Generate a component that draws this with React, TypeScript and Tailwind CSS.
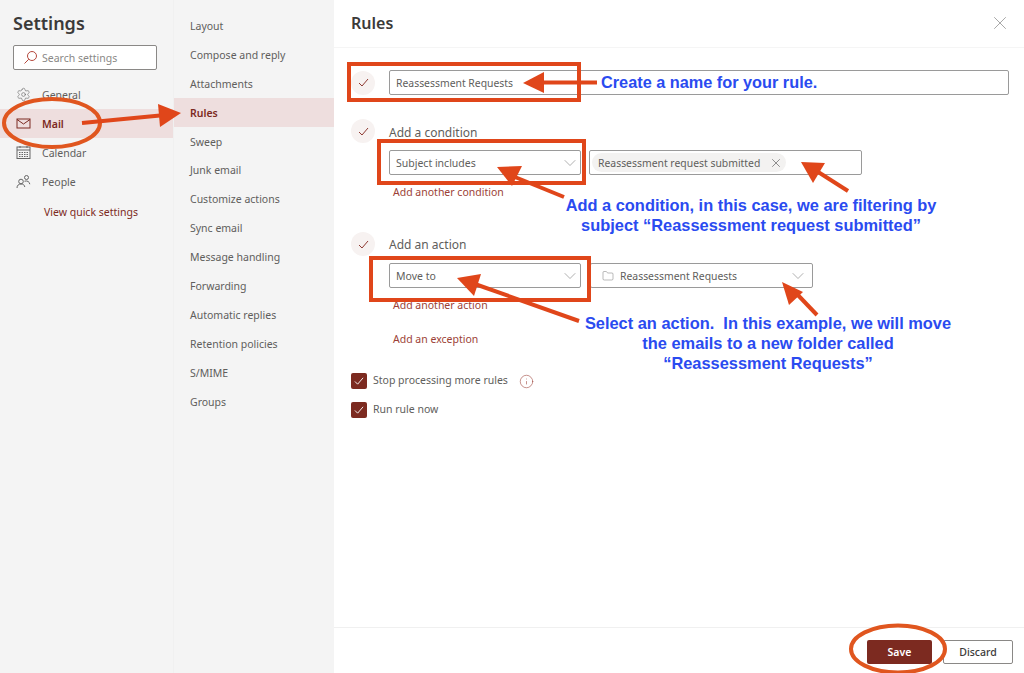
import React from 'react';
import { ChevronDown, Folder, Info, Settings, X } from 'lucide-react';

const subNav = ['Layout', 'Compose and reply', 'Attachments', 'Rules', 'Sweep', 'Junk email', 'Customize actions', 'Sync email', 'Message handling', 'Forwarding', 'Automatic replies', 'Retention policies', 'S/MIME', 'Groups'];

const MailIcon = () => (
    <svg width="15" height="15" viewBox="0 0 15 15" fill="none" stroke="#7c2a22" strokeWidth="1">
        <rect x="1" y="3" width="13" height="9" />
        <path d="M1 3.5 7.5 8 14 3.5" />
    </svg>
);

const CalendarIcon = () => (
    <svg width="15" height="15" viewBox="0 0 15 15" fill="none" stroke="#666" strokeWidth="1">
        <rect x="1" y="2" width="13" height="11.5" />
        <path d="M1 5h13M4 1v2M11 1v2" />
        <path d="M3 7.5h9M3 9.5h9M3 11.5h9" strokeDasharray="1.5 1" />
    </svg>
);

const PeopleIcon = () => (
    <svg width="15" height="15" viewBox="0 0 15 15" fill="none" stroke="#666" strokeWidth="1">
        <circle cx="5" cy="7.5" r="2.3" />
        <path d="M1 14c0-2.6 1.6-4 4-4s3.4 1 3.8 3" />
        <circle cx="10.5" cy="3.5" r="2" />
        <path d="M8.5 7.2c2.8-.8 5 .5 5.3 3" />
    </svg>
);

const SearchIcon = () => (
    <svg width="15" height="15" viewBox="0 0 15 15" fill="none" stroke="#b5483c" strokeWidth="1">
        <circle cx="9" cy="6" r="4.5" />
        <path d="M5.8 9.2 1.5 13.5" />
    </svg>
);

const StepCheck = () => (
    <div className="w-6 h-6 shrink-0 rounded-full bg-[#f7f2f1] flex items-center justify-center">
        <svg width="11" height="11" viewBox="0 0 11 11" fill="none" stroke="#8f3a32" strokeWidth="1">
            <path d="M1 6l3 3 6-7" />
        </svg>
    </div>
);

const CheckBox = () => (
    <div className="w-4 h-4 shrink-0 rounded-[2px] bg-[#7c2a20] flex items-center justify-center">
        <svg width="10" height="10" viewBox="0 0 11 11" fill="none" stroke="#fff" strokeWidth="1">
            <path d="M1 6l3 3 6-7" />
        </svg>
    </div>
);

const Select = ({ label, className }: { label: React.ReactNode; className: string }) => (
    <div className={`h-[25px] border border-[#9a9a9a] rounded-[2px] bg-white flex items-center justify-between pl-[6px] text-[#605e5c] ${className}`}>
        <div className="flex items-center pt-[2px]">{label}</div>
        <ChevronDown size={20} strokeWidth={0.7} color="#777" />
    </div>
);

const Arrow = ({ tail, neck, head }: { tail: string; neck: string; head: string }) => (
    <g>
        <polyline points={`${tail} ${neck}`} fill="none" stroke="#e0461a" strokeWidth="4" />
        <polygon points={head} fill="#e0461a" />
    </g>
);

export default function App() {
    return (
        <div className="relative w-[1024px] h-[673px] overflow-hidden bg-white flex text-[10.5px] text-[#605e5c] font-['Noto_Sans',sans-serif]">
            {/* settings nav */}
            <aside className="w-[173px] shrink-0 bg-[#f4f4f4]">
                <h2 className="h-[45px] pl-[13px] pt-[11px] text-[18px] leading-[24px] font-semibold text-[#3b3a39]">Settings</h2>
                <div className="mx-[13px] h-[25px] w-[144px] border border-[#8a8886] rounded-[2px] bg-white flex items-center pl-[9px] gap-[4px] text-[#8a8886]">
                    <SearchIcon />
                    <span className="pt-[2px]">Search settings</span>
                </div>
                <nav className="mt-[10px]">
                    <div className="h-[29px] pl-[16px] flex items-center gap-[11px]">
                        <Settings size={15} strokeWidth={1} color="#666" />
                        <span className="pt-[2px]">General</span>
                    </div>
                    <div className="h-[29px] pl-[16px] flex items-center gap-[11px] bg-[#eedede] text-[#7c2a22] font-semibold">
                        <MailIcon />
                        <span className="pt-[2px]">Mail</span>
                    </div>
                    <div className="h-[29px] pl-[16px] flex items-center gap-[11px]">
                        <CalendarIcon />
                        <span className="pt-[2px]">Calendar</span>
                    </div>
                    <div className="h-[29px] pl-[16px] flex items-center gap-[11px]">
                        <PeopleIcon />
                        <span className="pt-[2px]">People</span>
                    </div>
                    <div className="mt-[1px] h-[29px] pl-[44px] pt-[2px] flex items-center text-[#7c2a22]">View quick settings</div>
                </nav>
            </aside>

            <aside className="w-[161px] shrink-0 bg-[#f4f4f4] pt-[11.4px] border-l border-[#f0f0f0]">
                {subNav.map((item) => (
                    <div key={item} className={`h-[28.9px] pl-[16px] pt-[2px] flex items-center ${item === 'Rules' ? 'bg-[#eedede] text-[#7c2a22] font-semibold' : ''}`}>
                        {item}
                    </div>
                ))}
            </aside>

            {/* rule form */}
            <main className="flex-1 flex flex-col">
                <header className="h-[48px] shrink-0 border-b border-[#f5f5f5] pl-[17px] pr-[13px] pb-[2px] flex items-center justify-between">
                    <h1 className="text-[16px] font-semibold text-[#3b3a39]">Rules</h1>
                    <X size={22} strokeWidth={0.7} color="#777" />
                </header>

                <div className="flex-1 pl-[17px] pr-[15px] pt-[22px]">
                    <div className="flex items-center gap-[14px]">
                        <StepCheck />
                        <div className="flex-1 h-[25px] border border-[#9a9a9a] rounded-[2px] flex items-center pl-[6px] pt-[2px] text-[10.4px]">Reassessment Requests</div>
                    </div>

                    <div className="mt-[24px] flex items-center gap-[14px] h-[24px]">
                        <StepCheck />
                        <span className="text-[12px] pt-[3px]">Add a condition</span>
                    </div>
                    <div className="mt-[7px] ml-[38px] flex gap-[8px]">
                        <Select label="Subject includes" className="w-[192px]" />
                        <div className="w-[273px] h-[25px] border border-[#9a9a9a] rounded-[2px] flex items-center pl-[2px]">
                            <div className="h-[19px] rounded-full bg-[#f3f2f1] flex items-center pl-[6px] pr-[3px] gap-[9px]">
                                <span className="pt-[2px] text-[10.4px]">Reassessment request submitted</span>
                                <X size={14} strokeWidth={1} color="#444" />
                            </div>
                        </div>
                    </div>
                    <div className="mt-[10px] ml-[42px] h-[15px] leading-[15px] text-[#9c3f36]">Add another condition</div>

                    <div className="mt-[32px] flex items-center gap-[14px] h-[24px]">
                        <StepCheck />
                        <span className="text-[12px] pt-[2px]">Add an action</span>
                    </div>
                    <div className="mt-[7px] ml-[38px] flex gap-[9px]">
                        <Select label="Move to" className="w-[192px]" />
                        <Select
                            className="w-[223px] pr-[4px]"
                            label={
                                <>
                                    <Folder size={12} strokeWidth={0.9} color="#666" className="ml-[5px] mr-[6px]" />
                                    <span className="text-[10.4px]">Reassessment Requests</span>
                                </>
                            }
                        />
                    </div>
                    <div className="mt-[10px] ml-[42px] h-[15px] leading-[15px] text-[#9c3f36]">Add another action</div>
                    <div className="mt-[19px] ml-[42px] h-[15px] leading-[15px] text-[#9c3f36]">Add an exception</div>

                    <div className="mt-[26px] h-[16px] flex items-center gap-[6px]">
                        <CheckBox />
                        <span>Stop processing more rules</span>
                        <Info size={15} strokeWidth={0.9} color="#9c3f36" className="ml-[5px]" />
                    </div>
                    <div className="mt-[13px] h-[16px] flex items-center gap-[6px]">
                        <CheckBox />
                        <span>Run rule now</span>
                    </div>
                </div>

                <footer className="h-[46px] shrink-0 border-t border-[#f0f0f0] pr-[11px] pt-[12px] flex justify-end gap-[11px]">
                    <button className="w-[65px] h-[24px] pt-[1px] rounded-[2px] bg-[#7c2a20] text-white font-semibold">Save</button>
                    <button className="w-[70px] h-[24px] pt-[1px] rounded-[2px] border border-[#8a8886] font-medium text-[#3b3a39]">Discard</button>
                </footer>
            </main>

            {/* annotations drawn over the screenshot */}
            <svg className="absolute inset-0 pointer-events-none" width="1024" height="673" viewBox="0 0 1024 673" fill="none">
                <ellipse cx="52" cy="123" rx="48" ry="24" stroke="#e0561f" strokeWidth="4" />
                <ellipse cx="898" cy="649" rx="47" ry="23.5" stroke="#e0561f" strokeWidth="4" />
                <rect x="349" y="64" width="230" height="36" stroke="#e0461a" strokeWidth="4" />
                <rect x="379" y="141" width="205" height="42" stroke="#e0461a" strokeWidth="4" />
                <rect x="371" y="258" width="218" height="42" stroke="#e0461a" strokeWidth="4" />
                <Arrow tail="82,123" neck="160,115.5" head="158,104 181,113 160,127" />
                <Arrow tail="597,82.5" neck="540,82.5" head="523,83 544,72 544,93" />
                <Arrow tail="564,197" neck="510,175" head="497,167 522,166 512,186" />
                <Arrow tail="848,191" neck="815,170" head="801,162 825,163 813,183" />
                <Arrow tail="579,321" neck="472,283" head="457,278 481,274 474,296" />
                <Arrow tail="817,315" neck="795,292" head="782,282 803,292 789,305" />
            </svg>
            <div className="absolute left-[601px] top-[72px] text-[16.3px] leading-[20px] font-bold text-[#2a4bf0] font-['Liberation_Sans',sans-serif] whitespace-nowrap">Create a name for your rule.</div>
            <div className="absolute left-[551px] top-[195px] w-[400px] text-center text-[16.4px] leading-[20px] font-bold text-[#2a4bf0] font-['Liberation_Sans',sans-serif]">
                <div>Add a condition, in this case, we are filtering by</div>
                <div>subject “Reassessment request submitted”</div>
            </div>
            <div className="absolute left-[568px] top-[313px] w-[400px] text-center text-[16.4px] leading-[20px] font-bold text-[#2a4bf0] font-['Liberation_Sans',sans-serif] whitespace-pre">
                <div>Select an action.  In this example, we will move</div>
                <div>the emails to a new folder called</div>
                <div>“Reassessment Requests”</div>
            </div>
        </div>
    );
}
